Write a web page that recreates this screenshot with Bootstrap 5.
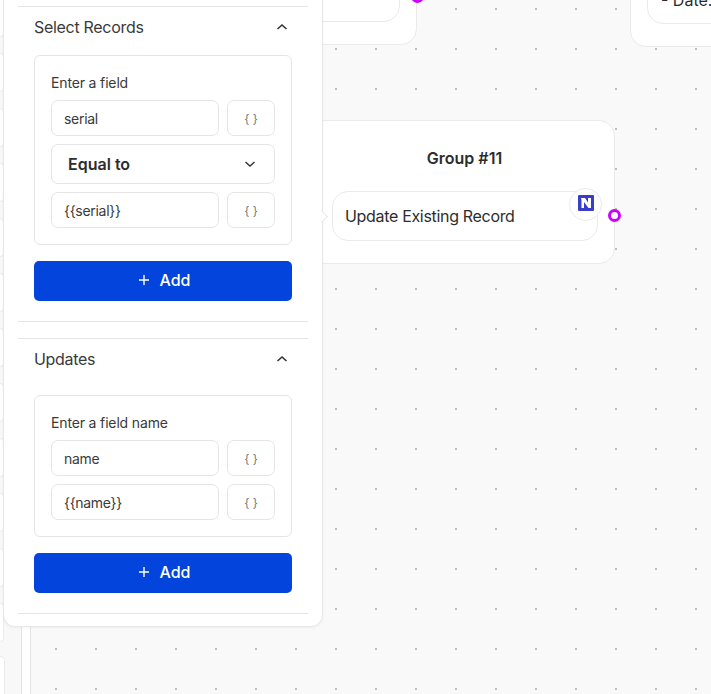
<!DOCTYPE html>
<html lang="en">
<head>
  <meta charset="UTF-8">
  <title>Update Existing Record</title>
  <link href="https://cdn.jsdelivr.net/npm/bootstrap@5.3.0/dist/css/bootstrap.min.css" rel="stylesheet">
  <style>
    body {
      margin: 0;
      height: 694px;
      overflow: hidden;
      background: #fff;
      font-family: Inter, "Liberation Sans", sans-serif;
      color: #2d2d2d;
    }

    /* canvas with dotted grid */
    .flow-canvas {
      position: absolute;
      left: 30px;
      top: 0;
      right: 0;
      bottom: 0;
      background-color: #f9f9f9;
      background-image: radial-gradient(circle, #bdbdbd 1px, transparent 1.2px);
      background-size: 40px 40px;
      background-position: 5px -11px;
      border-left: 1px solid #e4e4e4;
    }
    .left-edge {
      position: absolute;
      left: 0;
      top: 0;
      bottom: 0;
      width: 22px;
      background: #f8f8f8;
      border-right: 1px solid #e4e4e4;
      overflow: hidden;
    }
    .edge-item {
      flex: 0 0 39px;
      width: 4px;
      background: #fff;
      border: 1px solid #ececec;
      border-left: 0;
      border-radius: 0 6px 6px 0;
    }
    .edge-item.edge-first { flex-basis: 37px; border-top: 0; border-radius: 0 0 6px 0; }
    .edge-item.edge-tall { flex-basis: 43px; width: 5px; margin-top: -2px; }

    /* nodes */
    .flow-node {
      position: absolute;
      background: #fff;
      border: 1px solid #eaeaea;
      border-radius: 16px;
    }
    .node-top { left: 250px; top: -60px; width: 167px; height: 105px; }
    .node-top-inner { left: 250px; top: -60px; width: 150px; height: 82px; }
    .node-right { left: 630px; top: -60px; width: 120px; height: 107px; }
    .node-right-inner { left: 647px; top: -60px; width: 110px; height: 84px; font-size: 16px; line-height: 24px; padding: 47px 0 0 13px; white-space: nowrap; }
    .node-group { left: 300px; top: 120px; width: 315px; height: 144px; }
    .group-title { font-size: 16px; font-weight: 600; text-align: center; margin: 27px 0 0 14px; line-height: 20px; }
    .node-step {
      position: absolute;
      left: 332px;
      top: 191px;
      width: 266px;
      height: 50px;
      background: #fff;
      border: 1px solid #eaeaea;
      border-radius: 16px;
      font-size: 16px;
      line-height: 48px;
      padding-left: 12px;
      letter-spacing: -.32px;
    }
    .step-logo {
      position: absolute;
      left: 569px;
      top: 188px;
      width: 33px;
      height: 33px;
      background: #fff;
      border: 1px solid #eaeaea;
      border-radius: 50%;
    }
    .step-logo svg { margin-bottom: 3px; }
    .port {
      position: absolute;
      width: 13px;
      height: 13px;
      border: 3px solid #cc00ff;
      border-radius: 50%;
      background: #fff;
    }
    .port-a { left: 607.500px; top: 209px; }
    .port-b { left: 411px; top: -10px; background: #cc00ff; }

    /* side panel */
    .side-panel {
      position: absolute;
      left: 3px;
      top: -40px;
      width: 320px;
      height: 667px;
      background: #fff;
      border: 1px solid #e8e8e8;
      border-radius: 12px;
      box-shadow: 0 1px 3px rgba(0, 0, 0, .05);
      padding: 45px 14px 0;
    }
    .panel-arrow {
      position: absolute;
      left: 313px;
      top: 251px;
      width: 9px;
      height: 9px;
      background: #fff;
      border-top: 1px solid #e8e8e8;
      border-right: 1px solid #e8e8e8;
      transform: rotate(45deg);
    }
    .panel-section {
      border-top: 1px solid #e5e5e5;
      border-bottom: 1px solid #e5e5e5;
      padding: 0 16px 20px;
    }
    .panel-section + .panel-section { margin-top: 16px; }
    .panel-section + .panel-section .section-head { margin-bottom: 16px; }
    .section-head {
      height: 40px;
      margin-bottom: 8px;
      font-size: 16px;
      letter-spacing: -.3px;
      color: #3a3a3a;
    }
    .field-box {
      border: 1px solid #e5e5e5;
      border-radius: 6px;
      padding: 16px;
      margin-bottom: 16px;
    }
    .field-label {
      font-size: 14px;
      line-height: 20px;
      padding-top: 1px;
      margin-bottom: 7px;
      letter-spacing: -.15px;
      color: #3a3a3a;
    }
    .field-input {
      flex: 1 1 auto;
      height: 36px;
      border: 1px solid #e5e5e5;
      border-radius: 7px;
      font-size: 14px;
      line-height: 36px;
      padding-left: 12px;
      letter-spacing: -.3px;
      color: #3a3a3a;
    }
    .var-btn {
      flex: 0 0 48px;
      height: 36px;
      border: 1px solid #e5e5e5;
      border-radius: 7px;
      font-size: 12px;
      line-height: 35px;
      text-align: center;
      color: #777;
    }
    .select-box {
      height: 40px;
      border: 1px solid #e5e5e5;
      border-radius: 7px;
      padding: 0 18px 0 16px;
      font-size: 16px;
      font-weight: 600;
    }
    .add-btn {
      background: #0344dc;
      border: 0;
      border-radius: 5px;
      height: 40px;
      font-size: 16px;
      font-weight: 500;
      padding: 0 0 2px 3px;
      gap: 11px;
      color: #fff;
    }
    .add-btn:hover { background: #0344dc; color: #fff; }
  </style>
</head>
<body>

<div class="left-edge d-flex flex-column gap-3" id="leftEdge"></div>
<div class="flow-canvas"></div>

<!-- nodes on the canvas -->
<div class="flow-node node-top"></div>
<div class="flow-node node-top-inner"></div>
<div class="port port-b"></div>
<div class="flow-node node-right"></div>
<div class="flow-node node-right-inner">- Date:</div>

<div class="flow-node node-group">
  <div class="group-title">Group #11</div>
</div>
<div class="node-step">Update Existing Record</div>
<div class="step-logo d-flex align-items-center justify-content-center">
  <svg width="16" height="16" viewBox="0 0 16 16">
    <rect width="16" height="16" rx="1" fill="#3a3dc8"/>
    <path d="M3 3h4l3 4.500V3h3v10h-2.500L6 7v6H3.500V5.500z" fill="#fff"/>
  </svg>
</div>
<div class="port port-a"></div>

<!-- settings panel -->
<div class="side-panel">
  <div class="panel-arrow"></div>
  <div class="panel-section">
    <div class="section-head d-flex align-items-center justify-content-between">
      <span>Select Records</span>
      <svg width="12" height="8" viewBox="0 0 12 8" class="me-1"><path d="M1.500 6 6 2l4.500 4" fill="none" stroke="#333" stroke-width="1.600"/></svg>
    </div>
    <div class="field-box d-flex flex-column">
      <div class="field-label">Enter a field</div>
      <div class="d-flex gap-2 mb-2">
        <div class="field-input">serial</div>
        <div class="var-btn">{ }</div>
      </div>
      <div class="select-box d-flex align-items-center justify-content-between mb-2">
        <span>Equal to</span>
        <svg width="12" height="8" viewBox="0 0 12 8"><path d="M1.500 2 6 6l4.500-4" fill="none" stroke="#333" stroke-width="1.400"/></svg>
      </div>
      <div class="d-flex gap-2">
        <div class="field-input">{{serial}}</div>
        <div class="var-btn">{ }</div>
      </div>
    </div>
    <button class="btn add-btn w-100 d-flex align-items-center justify-content-center" type="button">
      <svg width="10" height="10" viewBox="0 0 10 10"><path d="M5 0v10M0 5h10" stroke="#fff" stroke-width="1.400"/></svg>
      <span>Add</span>
    </button>
  </div>

  <div class="panel-section">
    <div class="section-head d-flex align-items-center justify-content-between">
      <span>Updates</span>
      <svg width="12" height="8" viewBox="0 0 12 8" class="me-1"><path d="M1.500 6 6 2l4.500 4" fill="none" stroke="#333" stroke-width="1.600"/></svg>
    </div>
    <div class="field-box d-flex flex-column">
      <div class="field-label">Enter a field name</div>
      <div class="d-flex gap-2 mb-2">
        <div class="field-input">name</div>
        <div class="var-btn">{ }</div>
      </div>
      <div class="d-flex gap-2">
        <div class="field-input">{{name}}</div>
        <div class="var-btn">{ }</div>
      </div>
    </div>
    <button class="btn add-btn w-100 d-flex align-items-center justify-content-center" type="button">
      <svg width="10" height="10" viewBox="0 0 10 10"><path d="M5 0v10M0 5h10" stroke="#fff" stroke-width="1.400"/></svg>
      <span>Add</span>
    </button>
  </div>
</div>

<script src="https://cdn.jsdelivr.net/npm/bootstrap@5.3.0/dist/js/bootstrap.bundle.min.js"></script>
<script>
  // nodes of the list behind the panel, only their right edge shows
  const leftEdge = document.getElementById("leftEdge");
  for (let i = 0; i < 14; i++) {
    const item = document.createElement("div");
    item.className = "edge-item";
    if (i === 0) item.classList.add("edge-first");
    if (i === 12) item.classList.add("edge-tall");
    leftEdge.appendChild(item);
  }
</script>
</body>
</html>
